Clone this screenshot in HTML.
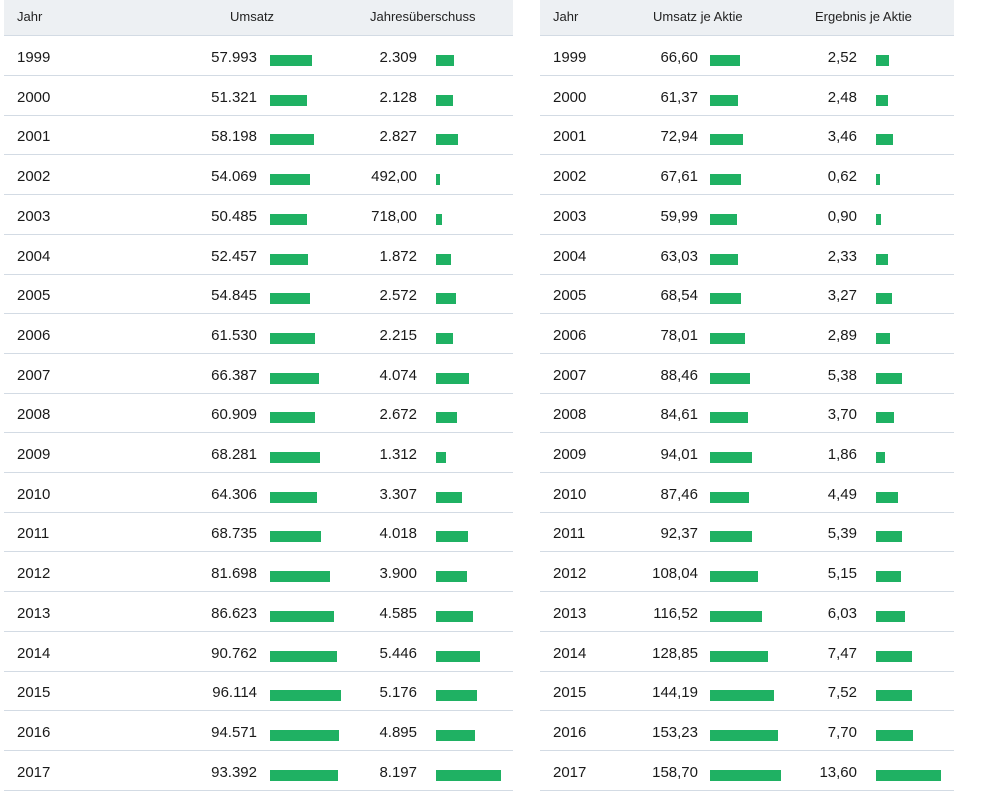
<!DOCTYPE html>
<html><head><meta charset="utf-8"><style>
body{margin:0;width:1000px;height:790px;background:#fff;font-family:"Liberation Sans",sans-serif;color:#1a1a1a;position:relative;overflow:hidden}
.t{position:absolute;top:0;height:790px}
.h{position:absolute;left:0;right:0;top:0;height:35px;background:#edf0f3;border-bottom:1px solid #d3dbe4}
.h span{position:absolute;top:9px;font-size:13px;line-height:16px;color:#222}
.r{position:absolute;left:0;right:0;height:39px;border-bottom:1px solid #d3dbe4}
.r span{position:absolute;top:13px;font-size:15px;line-height:18px}
.y{left:13px}
.v{text-align:right;width:100px}
.b{position:absolute;top:19px;height:11px;background:#1fb163}
</style></head><body>
<div class="t" style="left:4px;width:509px">
<div class="h"><span style="left:13px">Jahr</span><span style="left:226px">Umsatz</span><span style="left:366px">Jahresüberschuss</span></div>
</div>
<div class="t" style="left:540px;width:414px">
<div class="h"><span style="left:13px">Jahr</span><span style="left:113px">Umsatz je Aktie</span><span style="left:275px">Ergebnis je Aktie</span></div>
</div>

<div class="t" style="left:4px;width:509px">
<div class="r" style="top:36px"><span class="y">1999</span><span class="v" style="left:153px">57.993</span><i class="b" style="left:266px;width:42px"></i><span class="v" style="left:313px">2.309</span><i class="b" style="left:432px;width:18px"></i></div>
<div class="r" style="top:75.7px"><span class="y">2000</span><span class="v" style="left:153px">51.321</span><i class="b" style="left:266px;width:37px"></i><span class="v" style="left:313px">2.128</span><i class="b" style="left:432px;width:17px"></i></div>
<div class="r" style="top:115.4px"><span class="y">2001</span><span class="v" style="left:153px">58.198</span><i class="b" style="left:266px;width:44px"></i><span class="v" style="left:313px">2.827</span><i class="b" style="left:432px;width:22px"></i></div>
<div class="r" style="top:155.1px"><span class="y">2002</span><span class="v" style="left:153px">54.069</span><i class="b" style="left:266px;width:40px"></i><span class="v" style="left:313px">492,00</span><i class="b" style="left:432px;width:4px"></i></div>
<div class="r" style="top:194.8px"><span class="y">2003</span><span class="v" style="left:153px">50.485</span><i class="b" style="left:266px;width:37px"></i><span class="v" style="left:313px">718,00</span><i class="b" style="left:432px;width:6px"></i></div>
<div class="r" style="top:234.5px"><span class="y">2004</span><span class="v" style="left:153px">52.457</span><i class="b" style="left:266px;width:38px"></i><span class="v" style="left:313px">1.872</span><i class="b" style="left:432px;width:15px"></i></div>
<div class="r" style="top:274.2px"><span class="y">2005</span><span class="v" style="left:153px">54.845</span><i class="b" style="left:266px;width:40px"></i><span class="v" style="left:313px">2.572</span><i class="b" style="left:432px;width:20px"></i></div>
<div class="r" style="top:313.9px"><span class="y">2006</span><span class="v" style="left:153px">61.530</span><i class="b" style="left:266px;width:45px"></i><span class="v" style="left:313px">2.215</span><i class="b" style="left:432px;width:17px"></i></div>
<div class="r" style="top:353.6px"><span class="y">2007</span><span class="v" style="left:153px">66.387</span><i class="b" style="left:266px;width:49px"></i><span class="v" style="left:313px">4.074</span><i class="b" style="left:432px;width:33px"></i></div>
<div class="r" style="top:393.3px"><span class="y">2008</span><span class="v" style="left:153px">60.909</span><i class="b" style="left:266px;width:45px"></i><span class="v" style="left:313px">2.672</span><i class="b" style="left:432px;width:21px"></i></div>
<div class="r" style="top:433px"><span class="y">2009</span><span class="v" style="left:153px">68.281</span><i class="b" style="left:266px;width:50px"></i><span class="v" style="left:313px">1.312</span><i class="b" style="left:432px;width:10px"></i></div>
<div class="r" style="top:472.7px"><span class="y">2010</span><span class="v" style="left:153px">64.306</span><i class="b" style="left:266px;width:47px"></i><span class="v" style="left:313px">3.307</span><i class="b" style="left:432px;width:26px"></i></div>
<div class="r" style="top:512.4px"><span class="y">2011</span><span class="v" style="left:153px">68.735</span><i class="b" style="left:266px;width:51px"></i><span class="v" style="left:313px">4.018</span><i class="b" style="left:432px;width:32px"></i></div>
<div class="r" style="top:552.1px"><span class="y">2012</span><span class="v" style="left:153px">81.698</span><i class="b" style="left:266px;width:60px"></i><span class="v" style="left:313px">3.900</span><i class="b" style="left:432px;width:31px"></i></div>
<div class="r" style="top:591.8px"><span class="y">2013</span><span class="v" style="left:153px">86.623</span><i class="b" style="left:266px;width:64px"></i><span class="v" style="left:313px">4.585</span><i class="b" style="left:432px;width:37px"></i></div>
<div class="r" style="top:631.5px"><span class="y">2014</span><span class="v" style="left:153px">90.762</span><i class="b" style="left:266px;width:67px"></i><span class="v" style="left:313px">5.446</span><i class="b" style="left:432px;width:44px"></i></div>
<div class="r" style="top:671.2px"><span class="y">2015</span><span class="v" style="left:153px">96.114</span><i class="b" style="left:266px;width:71px"></i><span class="v" style="left:313px">5.176</span><i class="b" style="left:432px;width:41px"></i></div>
<div class="r" style="top:710.9px"><span class="y">2016</span><span class="v" style="left:153px">94.571</span><i class="b" style="left:266px;width:69px"></i><span class="v" style="left:313px">4.895</span><i class="b" style="left:432px;width:39px"></i></div>
<div class="r" style="top:750.6px"><span class="y">2017</span><span class="v" style="left:153px">93.392</span><i class="b" style="left:266px;width:68px"></i><span class="v" style="left:313px">8.197</span><i class="b" style="left:432px;width:65px"></i></div>
</div>

<div class="t" style="left:540px;width:414px">
<div class="r" style="top:36px"><span class="y">1999</span><span class="v" style="left:58px">66,60</span><i class="b" style="left:170px;width:30px"></i><span class="v" style="left:217px">2,52</span><i class="b" style="left:336px;width:13px"></i></div>
<div class="r" style="top:75.7px"><span class="y">2000</span><span class="v" style="left:58px">61,37</span><i class="b" style="left:170px;width:28px"></i><span class="v" style="left:217px">2,48</span><i class="b" style="left:336px;width:12px"></i></div>
<div class="r" style="top:115.4px"><span class="y">2001</span><span class="v" style="left:58px">72,94</span><i class="b" style="left:170px;width:33px"></i><span class="v" style="left:217px">3,46</span><i class="b" style="left:336px;width:17px"></i></div>
<div class="r" style="top:155.1px"><span class="y">2002</span><span class="v" style="left:58px">67,61</span><i class="b" style="left:170px;width:31px"></i><span class="v" style="left:217px">0,62</span><i class="b" style="left:336px;width:4px"></i></div>
<div class="r" style="top:194.8px"><span class="y">2003</span><span class="v" style="left:58px">59,99</span><i class="b" style="left:170px;width:27px"></i><span class="v" style="left:217px">0,90</span><i class="b" style="left:336px;width:5px"></i></div>
<div class="r" style="top:234.5px"><span class="y">2004</span><span class="v" style="left:58px">63,03</span><i class="b" style="left:170px;width:28px"></i><span class="v" style="left:217px">2,33</span><i class="b" style="left:336px;width:12px"></i></div>
<div class="r" style="top:274.2px"><span class="y">2005</span><span class="v" style="left:58px">68,54</span><i class="b" style="left:170px;width:31px"></i><span class="v" style="left:217px">3,27</span><i class="b" style="left:336px;width:16px"></i></div>
<div class="r" style="top:313.9px"><span class="y">2006</span><span class="v" style="left:58px">78,01</span><i class="b" style="left:170px;width:35px"></i><span class="v" style="left:217px">2,89</span><i class="b" style="left:336px;width:14px"></i></div>
<div class="r" style="top:353.6px"><span class="y">2007</span><span class="v" style="left:58px">88,46</span><i class="b" style="left:170px;width:40px"></i><span class="v" style="left:217px">5,38</span><i class="b" style="left:336px;width:26px"></i></div>
<div class="r" style="top:393.3px"><span class="y">2008</span><span class="v" style="left:58px">84,61</span><i class="b" style="left:170px;width:38px"></i><span class="v" style="left:217px">3,70</span><i class="b" style="left:336px;width:18px"></i></div>
<div class="r" style="top:433px"><span class="y">2009</span><span class="v" style="left:58px">94,01</span><i class="b" style="left:170px;width:42px"></i><span class="v" style="left:217px">1,86</span><i class="b" style="left:336px;width:9px"></i></div>
<div class="r" style="top:472.7px"><span class="y">2010</span><span class="v" style="left:58px">87,46</span><i class="b" style="left:170px;width:39px"></i><span class="v" style="left:217px">4,49</span><i class="b" style="left:336px;width:22px"></i></div>
<div class="r" style="top:512.4px"><span class="y">2011</span><span class="v" style="left:58px">92,37</span><i class="b" style="left:170px;width:42px"></i><span class="v" style="left:217px">5,39</span><i class="b" style="left:336px;width:26px"></i></div>
<div class="r" style="top:552.1px"><span class="y">2012</span><span class="v" style="left:58px">108,04</span><i class="b" style="left:170px;width:48px"></i><span class="v" style="left:217px">5,15</span><i class="b" style="left:336px;width:25px"></i></div>
<div class="r" style="top:591.8px"><span class="y">2013</span><span class="v" style="left:58px">116,52</span><i class="b" style="left:170px;width:52px"></i><span class="v" style="left:217px">6,03</span><i class="b" style="left:336px;width:29px"></i></div>
<div class="r" style="top:631.5px"><span class="y">2014</span><span class="v" style="left:58px">128,85</span><i class="b" style="left:170px;width:58px"></i><span class="v" style="left:217px">7,47</span><i class="b" style="left:336px;width:36px"></i></div>
<div class="r" style="top:671.2px"><span class="y">2015</span><span class="v" style="left:58px">144,19</span><i class="b" style="left:170px;width:64px"></i><span class="v" style="left:217px">7,52</span><i class="b" style="left:336px;width:36px"></i></div>
<div class="r" style="top:710.9px"><span class="y">2016</span><span class="v" style="left:58px">153,23</span><i class="b" style="left:170px;width:68px"></i><span class="v" style="left:217px">7,70</span><i class="b" style="left:336px;width:37px"></i></div>
<div class="r" style="top:750.6px"><span class="y">2017</span><span class="v" style="left:58px">158,70</span><i class="b" style="left:170px;width:71px"></i><span class="v" style="left:217px">13,60</span><i class="b" style="left:336px;width:65px"></i></div>
</div>
</body></html>
